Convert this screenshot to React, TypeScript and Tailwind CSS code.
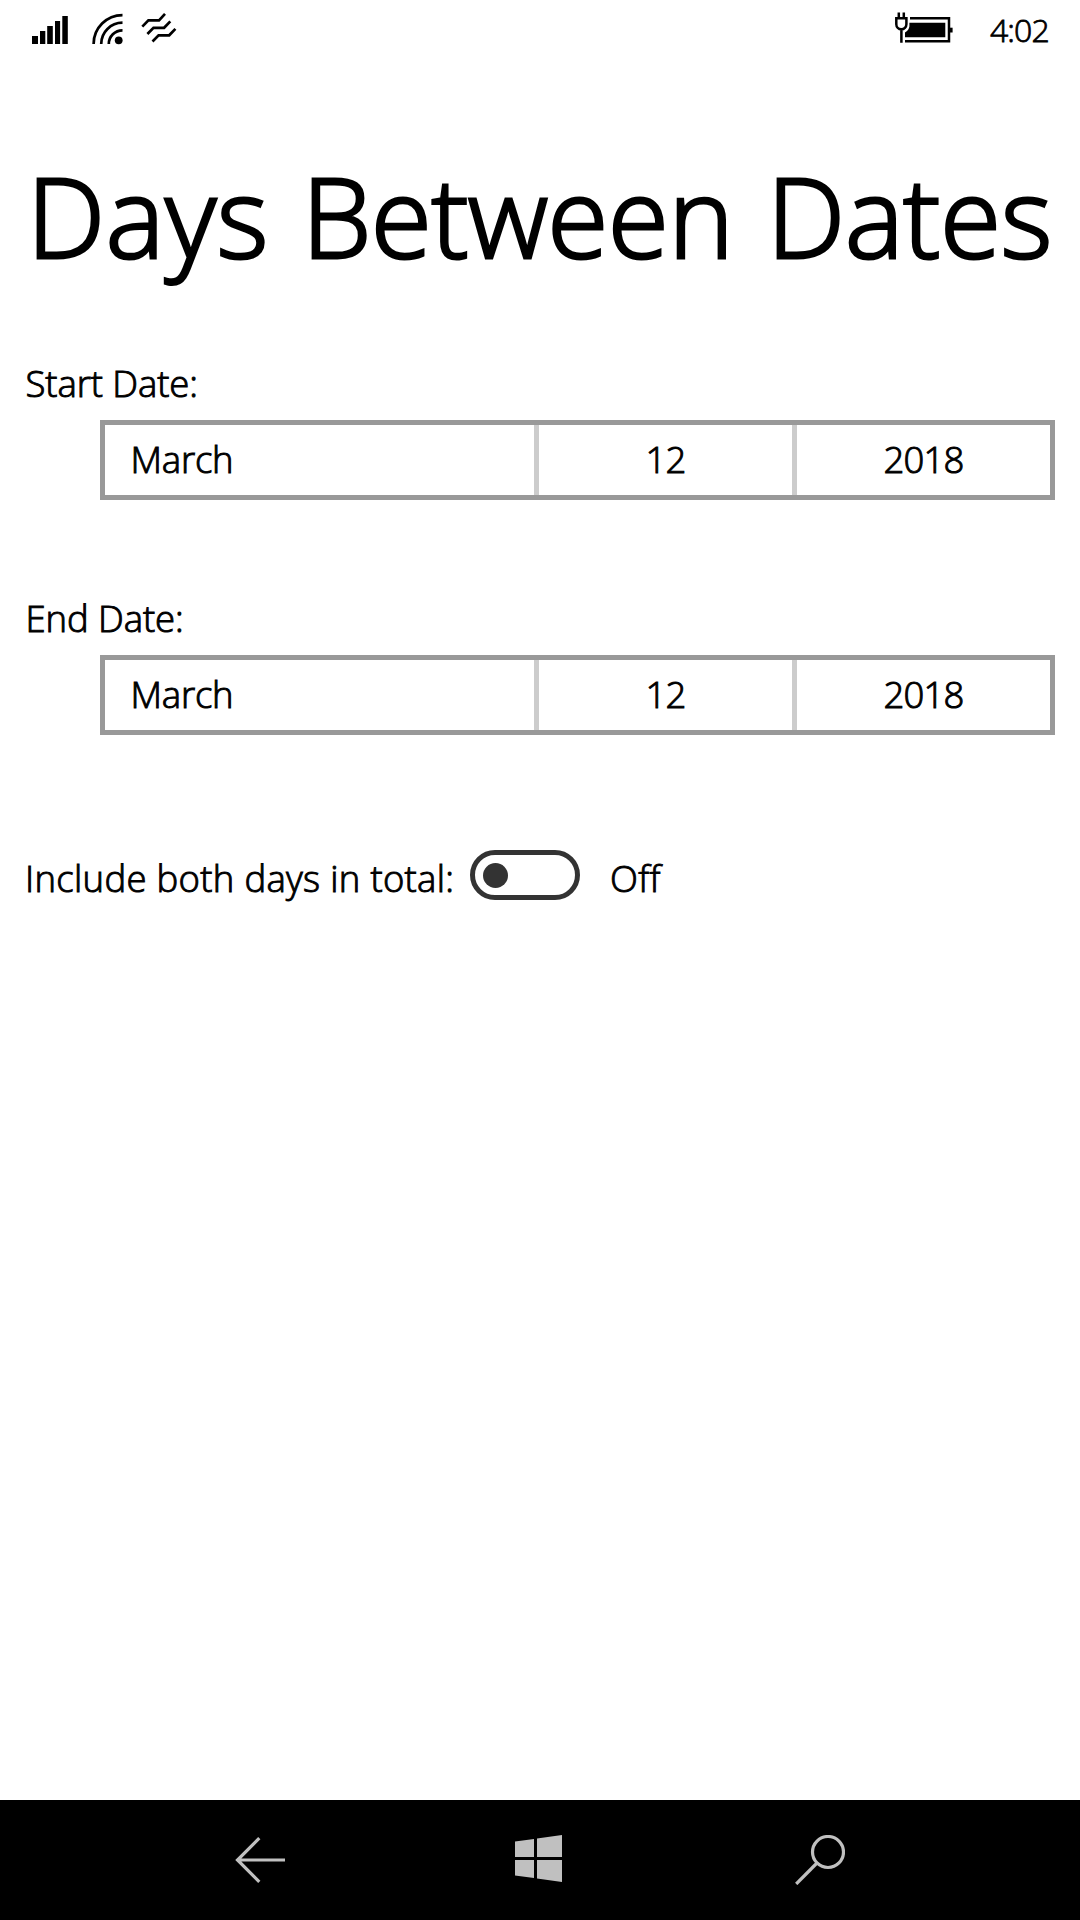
import React, { useState } from "react";

function StatusBar() {
  return (
    <header className="flex h-[60px] items-start justify-between pr-[31px]">
      <svg width="190" height="60" viewBox="0 0 190 60" fill="none" stroke="#000">
        <g fill="#000" stroke="none">
          <rect x="32" y="36" width="6" height="8" />
          <rect x="40" y="31" width="5.3" height="13" />
          <rect x="47.2" y="26" width="5.6" height="18" />
          <rect x="55" y="21" width="5.1" height="23" />
          <rect x="62.3" y="16" width="5.5" height="28" />
          <circle cx="118.7" cy="40.3" r="3.9" />
        </g>
        <g strokeWidth="2.7">
          <path d="M93.6 44A28.9 28.9 0 0 1 122.5 15.1" />
          <path d="M101.2 44A21.3 21.3 0 0 1 122.5 22.7" />
          <path d="M108.8 44A13.7 13.7 0 0 1 122.5 30.3" />
          <path d="M142.3 26.6L148.4 20.4H159L165 13.9" />
          <path d="M147.4 34L153.5 27.8H164.1L170.3 21.4" />
          <path d="M152.5 41.5L158.6 35.3H169.2L175.4 28.9" />
        </g>
      </svg>
      <div className="flex">
        <svg width="96" height="60" viewBox="893 0 96 60" fill="none" stroke="#000">
          <path d="M910 18.3H949V41.2H905" strokeWidth="2.5" />
          <path d="M905 32.4Q908.8 30.5 909.4 26.5V22.7H945.3V37.3H905Z" fill="#000" stroke="none" />
          <rect x="950" y="27.7" width="2.6" height="4.8" fill="#000" stroke="none" />
          <path d="M898.8 12.5V18M903.8 12.5V18" strokeWidth="2.5" />
          <path d="M896.3 18.3H906.4V24.2A5.05 5.05 0 0 1 896.3 24.2ZM901.4 29V42.7" strokeWidth="2.5" />
        </svg>
        <span className="w-[60px] pl-px text-[32px] leading-[60px] tracking-[-0.9px] whitespace-nowrap [-webkit-text-stroke:0.8px_black]">
          4:02
        </span>
      </div>
    </header>
  );
}

function DateField({ label }: { label: string }) {
  return (
    <section>
      <div className="pl-[25.5px] leading-[52px] tracking-[-0.1px]">{label}</div>
      <div className="mt-[11px] mr-[25px] ml-[100px] flex h-20 border-5 border-[#999] leading-[69px]">
        <div className="w-[429px] pl-[25.5px] tracking-[-0.2px]">March</div>
        <div className="w-[258px] border-l-5 border-[#ccc] text-center tracking-[-0.9px]">12</div>
        <div className="w-[258px] border-l-5 border-[#ccc] text-center tracking-[-0.8px]">2018</div>
      </div>
    </section>
  );
}

function Toggle({ on, onChange }: { on: boolean; onChange: () => void }) {
  return (
    <button
      role="switch"
      aria-checked={on}
      aria-label="Include both days in total"
      onClick={onChange}
      className={`flex h-[50px] w-[110px] items-center rounded-full border-5 border-[#333] px-2 ${on ? "justify-end" : "justify-start"}`}
    >
      <span className="size-[25px] rounded-full bg-[#333]" />
    </button>
  );
}

function NavBar() {
  return (
    <nav className="flex h-[120px] items-center bg-black pl-[235px]">
      <svg width="50" height="48" viewBox="235 1836 50 48" fill="none" stroke="#c0c0c0" strokeWidth="3.2">
        <path d="M259.3 1838.2L237.5 1860L259.3 1881.8M237.5 1860H285" />
      </svg>
      <svg className="ml-[230px]" width="47" height="50" viewBox="515 1835 47 50" fill="#c0c0c0">
        <path d="M515 1841.5L534 1839V1857H515ZM537 1838.6L562 1835V1857H537ZM515 1860H534V1878L515 1875.4ZM537 1860H562V1882L537 1878.5Z" />
      </svg>
      <svg className="ml-[233px]" width="50" height="50" viewBox="795 1835 50 50" fill="none" stroke="#c0c0c0" strokeWidth="3.2">
        <circle cx="828" cy="1852" r="15.5" />
        <path d="M817 1863L796.2 1884" />
      </svg>
    </nav>
  );
}

export default function App() {
  const [includeBoth, setIncludeBoth] = useState(false);
  return (
    <div className="flex h-[1920px] w-[1080px] flex-col overflow-hidden bg-white font-['Open_Sans',sans-serif] text-[36.5px] font-light text-black [-webkit-text-stroke:0.95px_black]">
      <StatusBar />
      <h1 className="mt-20 flex h-[150px] pl-[27px] text-[110.5px] leading-[151px] whitespace-nowrap [-webkit-text-stroke:3px_black]">
        <span className="w-[275px] tracking-[0.8px]">Days</span>
        <span className="w-[465px] tracking-[-0.3px]">Between</span>
        <span className="tracking-[-0.1px]">Dates</span>
      </h1>
      <main className="flex grow flex-col pt-[67px]">
        <DateField label="Start Date:" />
        <div className="h-[92px]" />
        <DateField label="End Date:" />
        <div className="mt-[115px] flex pl-[25px]">
          <span className="mt-0.5 w-[445px] leading-[52px] tracking-[0.3px] whitespace-nowrap">
            Include both days in total:
          </span>
          <Toggle on={includeBoth} onChange={() => setIncludeBoth(!includeBoth)} />
          <span className="mt-0.5 ml-[30px] leading-[52px] tracking-[0.3px]">{includeBoth ? "On" : "Off"}</span>
        </div>
      </main>
      <NavBar />
    </div>
  );
}
